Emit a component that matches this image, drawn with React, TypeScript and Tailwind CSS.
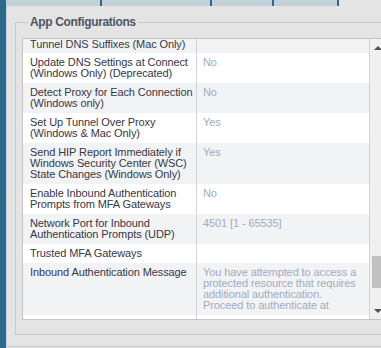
const rows: { label: string[]; value: string[] }[] = [
  { label: ["Update DNS Settings at Connect", "(Windows Only) (Deprecated)"], value: ["No"] },
  { label: ["Detect Proxy for Each Connection", "(Windows only)"], value: ["No"] },
  { label: ["Set Up Tunnel Over Proxy", "(Windows & Mac Only)"], value: ["Yes"] },
  {
    label: ["Send HIP Report Immediately if", "Windows Security Center (WSC)", "State Changes (Windows Only)"],
    value: ["Yes"],
  },
  { label: ["Enable Inbound Authentication", "Prompts from MFA Gateways"], value: ["No"] },
  { label: ["Network Port for Inbound", "Authentication Prompts (UDP)"], value: ["4501 [1 - 65535]"] },
  { label: ["Trusted MFA Gateways"], value: [] },
  {
    label: ["Inbound Authentication Message"],
    value: [
      "You have attempted to access a",
      "protected resource that requires",
      "additional authentication.",
      "Proceed to authenticate at",
    ],
  },
];

const App = () => {
  return (
    <div className="w-[381px] h-[348px] overflow-hidden flex bg-[#e4e4e4] font-['Liberation_Sans',Arial,sans-serif]">
      <div className="w-[6px] shrink-0 bg-[#2b6a89]" />
      <div className="w-[600px] shrink-0 flex flex-col">
        {/* tab strip */}
        <div className="h-[6px] flex shrink-0">
          <div className="w-[96px] bg-[#c2d2d8] border-r-2 border-[#2b6a89]" />
          <div className="w-[110px] bg-[#c2d2d8] border-r-2 border-[#2b6a89]" />
          <div className="w-[62px] bg-[#c2d2d8] border-r-2 border-[#2b6a89]" />
          <div className="w-[65px] bg-[#c2d2d8] border-r-2 border-[#2b6a89]" />
        </div>
        <div className="h-[341px] border-l border-b border-[#cdcdcd] pl-[8px] pt-[9px]">
          <fieldset className="h-[320px] border border-[#c8c8c8] pl-[6px] pb-[14px] flex flex-col">
            <legend className="ml-[6px] px-[2px] text-[12px] leading-[14px] font-bold tracking-[-0.35px] text-[#4d5661]">
              App Configurations
            </legend>
            <div className="mt-[9px] h-[282px] w-[400px] border border-[#c4c4c4] bg-white flex overflow-hidden">
              <div className="w-[346px] shrink-0 overflow-hidden text-[11px] leading-[11px] tracking-[-0.1px]">
                {/* first row, partly scrolled out of view */}
                <div className="h-[14px] flex bg-[#f2f3f5]">
                  <div className="w-[173px] shrink-0 pl-[7px] text-[#363845] whitespace-nowrap">
                    Tunnel DNS Suffixes (Mac Only)
                  </div>
                  <div className="flex-1 border-l border-[#d4d4d8]" />
                </div>
                {rows.map((r, i) => (
                  <div key={i} className={`flex ${i % 2 === 1 ? "bg-[#f2f3f5]" : "bg-white"}`}>
                    <div className="w-[173px] shrink-0 pl-[7px] py-[4px] text-[#363845] whitespace-nowrap overflow-hidden">
                      {r.label.map((l) => (
                        <div key={l}>{l}</div>
                      ))}
                    </div>
                    <div className="flex-1 border-l border-[#d4d4d8] pl-[6px] py-[4px] text-[#a2abbd] whitespace-nowrap">
                      {r.value.map((v) => (
                        <div key={v}>{v}</div>
                      ))}
                    </div>
                  </div>
                ))}
                <div className="h-[20px] flex bg-white">
                  <div className="w-[173px] shrink-0" />
                  <div className="flex-1 border-l border-[#d4d4d8]" />
                </div>
              </div>
              {/* scrollbar */}
              <div className="w-[17px] shrink-0 border-l border-[#d4d4d8] bg-[#f0f0f0] flex flex-col items-center">
                <div className="h-[17px] flex items-center justify-center">
                  <div className="w-0 h-0 border-l-[4px] border-r-[4px] border-b-[4px] border-l-transparent border-r-transparent border-b-[#505050]" />
                </div>
                <div className="flex-1 w-full px-[2px] flex flex-col">
                  <div className="mt-[200px] h-[32px] bg-[#c1c1c1]" />
                </div>
                <div className="h-[17px] flex items-center justify-center">
                  <div className="w-0 h-0 border-l-[4px] border-r-[4px] border-t-[4px] border-l-transparent border-r-transparent border-t-[#505050]" />
                </div>
              </div>
            </div>
          </fieldset>
        </div>
      </div>
    </div>
  );
};

export default App;
